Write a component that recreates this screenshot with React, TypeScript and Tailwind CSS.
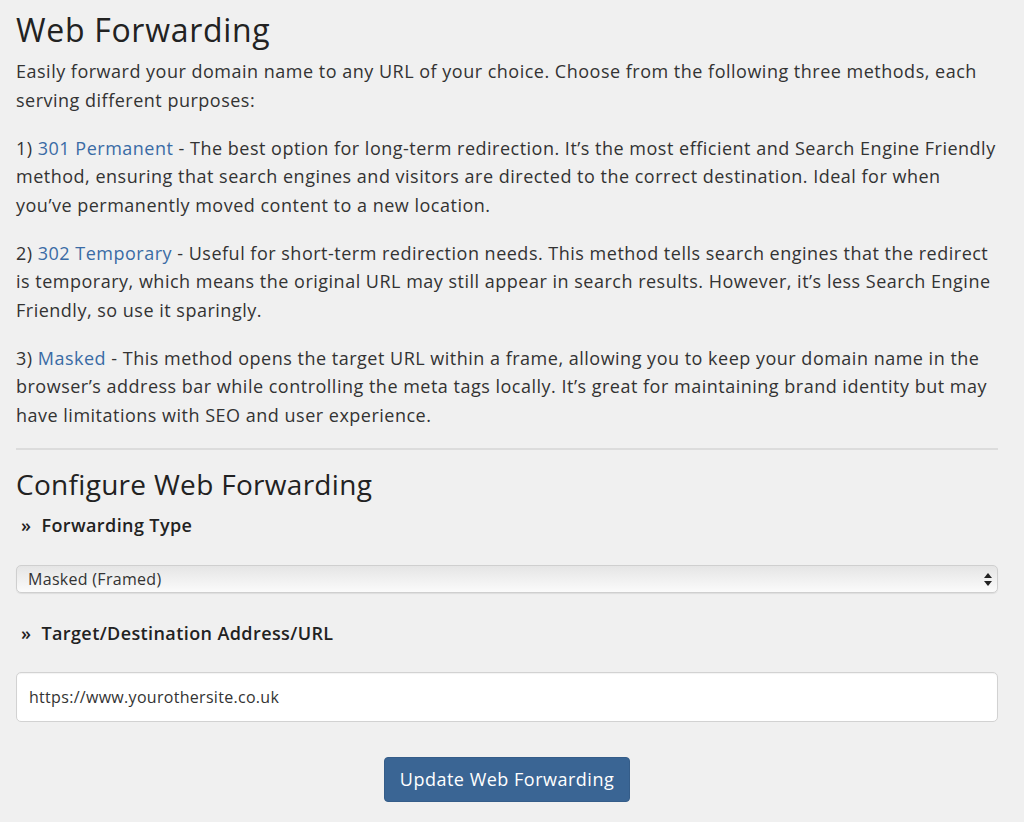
import React from 'react';

const font = "font-['Open_Sans',sans-serif]";

const App: React.FC = () => {
  return (
    <div className={`min-h-screen bg-[#f0f0f0] text-[#333] ${font}`}>
      <div className="w-[982px] ml-4 pt-[6px] pb-5">
        <h1 className="text-[32px] leading-[48px] font-normal text-[#222] tracking-[0.7px] mb-[3px]">Web Forwarding</h1>
        <div className="text-[18px] leading-[28.5px] text-[#333] tracking-[0.5px]">
          <p className="mb-[19.5px]">
            Easily forward your domain name to any URL of your choice. Choose from the following three methods, each
            serving different purposes:
          </p>
          <p className="mb-[19.5px]">
            1) <a className="text-[#3a6ba5]">301 Permanent</a> - The best option for long-term redirection. It’s the most
            efficient and Search Engine Friendly method, ensuring that search engines and visitors are directed to the
            correct destination. Ideal for when you’ve permanently moved content to a new location.
          </p>
          <p className="mb-[19.5px]">
            2) <a className="text-[#3a6ba5]">302 Temporary</a> - Useful for short-term redirection needs. This method
            tells search engines that the redirect is temporary, which means the original URL may still appear in search
            results. However, it’s less Search Engine Friendly, so use it sparingly.
          </p>
          <p>
            3) <a className="text-[#3a6ba5]">Masked</a> - This method opens the target URL within a frame, allowing you to
            keep your domain name in the browser’s address bar while controlling the meta tags locally. It’s great for
            maintaining brand identity but may have limitations with SEO and user experience.
          </p>
        </div>

        <hr className="mt-[19px] border-0 border-t-2 border-[#dcdcdc]" />

        <h2 className="mt-[14px] text-[28px] leading-[40px] font-normal text-[#222] tracking-[0.3px]">Configure Web Forwarding</h2>
        <div className="mt-[7px] flex items-center gap-[10px] pl-[5px] text-[18px] leading-[28px] font-semibold text-[#222] tracking-[0.4px]">
          <span>»</span>
          <span>Forwarding Type</span>
        </div>

        <div className="mt-[26px] relative h-[28px] rounded-[5px] border border-[#cfcfcf] bg-gradient-to-b from-[#e5e5e5] to-[#fbfbfb] shadow-[0_1px_1px_rgba(0,0,0,0.08)] flex items-center px-[11px] text-[16px] text-[#333] tracking-[0.3px]">
          <span>Masked (Framed)</span>
          <svg className="absolute right-[4px] top-[6px]" width="10" height="15" viewBox="0 0 10 15">
            <path d="M5 1 L9 6 L1 6 Z" fill="#222" />
            <path d="M5 14 L9 9 L1 9 Z" fill="#222" />
          </svg>
        </div>

        <div className="mt-[26px] flex items-center gap-[10px] pl-[5px] text-[18px] leading-[28px] font-semibold text-[#222] tracking-[0.4px]">
          <span>»</span>
          <span>Target/Destination Address/URL</span>
        </div>

        <div className="mt-[25px] h-[50px] rounded-[5px] border border-[#d2d2d2] bg-white flex items-center px-[12px] text-[16px] text-[#333] tracking-[0.3px] shadow-[inset_0_1px_1px_rgba(0,0,0,0.05)]">
          https://www.yourothersite.co.uk
        </div>

        <div className="mt-[35px] flex justify-center">
          <button className="h-[45px] w-[246px] rounded-[4px] bg-[#3a6594] text-white text-[18px] tracking-[0.5px] border border-[#355d89]">
            Update Web Forwarding
          </button>
        </div>
      </div>
    </div>
  );
};

export default App;
